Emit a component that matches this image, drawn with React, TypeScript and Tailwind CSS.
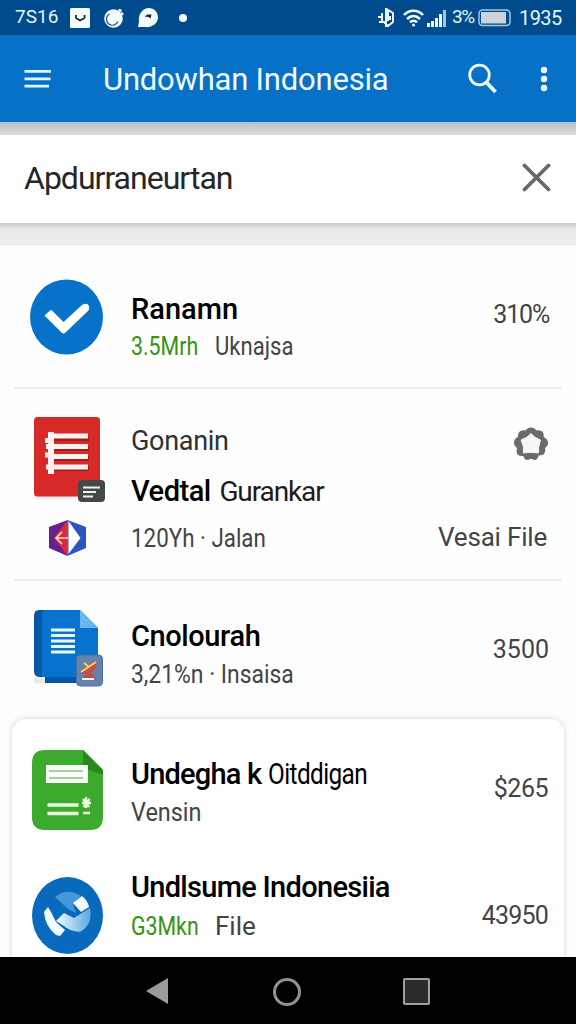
import type { ReactNode } from 'react';

function StatusBar() {
  return (
    <div className="flex h-[35px] items-center bg-[#004b8d] pl-[15px] pr-[15px] text-[19px] text-[#e4f5ff]">
      <span className="w-[55px]">7S16</span>
      <svg width="20" height="20" viewBox="0 0 20 20">
        <rect width="20" height="20" rx="1.5" fill="#f4fcff" />
        <path d="M6 7v3l4 2.500L14.500 10V7" fill="none" stroke="#17283c" strokeWidth="1.800" />
      </svg>
      <svg width="24" height="22" viewBox="0 0 24 22" className="ml-[13px]">
        <circle cx="10.5" cy="11.5" r="9.3" fill="#f4fcff" />
        <path d="M6.500 7a6 6 0 1 0 8.500 7.500" fill="none" stroke="#31506b" strokeWidth="1.2" />
        <path d="M15.500 3l3 1M20 6l-1.500 1.500" stroke="#f4fcff" strokeWidth="2.500" />
      </svg>
      <svg width="22" height="20" viewBox="0 0 22 20" className="ml-[10px]">
        <path d="M1 19L2 13C1 6 6 0 12 0c5 0 9 4 9 9 0 7-7 11-13 10z" fill="#f4fcff" />
        <path d="M7.500 8.500l3-2h4l-1 4-2-1.500z" fill="#152a3d" />
      </svg>
      <span className="ml-[20px] size-2 rounded-full bg-[#f4fcff]" />
      <svg width="18" height="20" viewBox="0 0 18 20" className="ml-auto" fill="none" stroke="#f4fcff" strokeWidth="1.9">
        <path d="M9 0v19M5 5v10M1 9h4M2 14h5l4 4 5-4V5l-5-3v11M13 8v4" />
      </svg>
      <svg width="21" height="18" viewBox="0 0 21 18" className="ml-[8px]" fill="none" stroke="#f4fcff" strokeWidth="2.6">
        <path d="M1 6C6 .3 15 .3 20 6M4 10c4-4 9-4 13 0M7 13.3c2-2 5-2 7 0" />
        <circle cx="10.5" cy="16" r="1.5" fill="#f4fcff" stroke="none" />
      </svg>
      <svg width="20" height="18" viewBox="0 0 20 18" className="ml-[3px]" fill="#f4fcff">
        <path d="M0 14h3v4H0zM4 12h3v6H4zM8 9h3v9H8zM12 5h3v13h-3z" />
        <path d="M16 1h3v17h-3z" fill="#a8c4dc" />
      </svg>
      <span className="ml-[5px] w-[26px] text-[19px] tracking-[-1.5px]">3%</span>
      <svg width="34" height="18" viewBox="0 0 34 18">
        <rect x="1" y="1" width="31" height="15.5" rx="3.5" fill="none" stroke="#a9c6d8" strokeWidth="1.5" />
        <rect x="3" y="3" width="25" height="11.5" fill="#ccd1dc" />
      </svg>
      <span className="ml-[7px] w-[42px] text-[20px] leading-[20px] tracking-[-0.6px]">1935</span>
    </div>
  );
}

function AppBar() {
  return (
    <header className="flex h-[87px] items-center bg-[#0770c7] pl-[24px] pr-[28px] text-[#f0fbff]">
      <svg width="28" height="20" viewBox="0 0 28 20" stroke="#dff8ff" strokeWidth="2.7">
        <path d="M.5 2.3h26.5M.5 9.8h26M.5 17.2h24.5" />
      </svg>
      <h1 className="ml-[51px] mt-[2px] whitespace-nowrap text-[31px] leading-[40px] tracking-[-0.2px]">
        Undowhan Indonesia
      </h1>
      <svg width="30" height="32" viewBox="0 0 30 32" className="ml-auto" fill="none" stroke="#f0fbff">
        <circle cx="11.5" cy="12" r="9.8" strokeWidth="2.8" />
        <path d="M18.5 19.5l9 9.5" strokeWidth="3.8" />
      </svg>
      <svg width="8" height="26" viewBox="0 0 8 26" className="ml-[42px]" fill="#f0fbff">
        <circle cx="4" cy="4" r="3.2" />
        <circle cx="4" cy="13" r="3.2" />
        <circle cx="4" cy="22" r="3.2" />
      </svg>
    </header>
  );
}

function CheckIcon() {
  return (
    <svg width="73" height="76" viewBox="0 0 73 76">
      <ellipse cx="36.5" cy="38" rx="36.5" ry="37.5" fill="#0672c9" />
      <path d="M14.500 36.500L20 31.500q1-1 2 0l11.500 11.500L52 26q5-3 7 1 1 3-1 5L35.500 53.500q-2 2-4 0z" fill="#fff" />
    </svg>
  );
}

function RedDocIcon() {
  return (
    <svg width="72" height="88" viewBox="0 0 72 88">
      <rect x="1" y="78" width="64" height="4" fill="#ededed" />
      <rect width="66" height="79.5" rx="3.5" fill="#d62a28" />
      <g stroke="#a91b1b" strokeWidth="5" transform="translate(1 2)">
        <path d="M18 19.5h36M18 29.5h36M18 39.5h36M18 49.5h36" />
      </g>
      <g stroke="#fff3f1" strokeWidth="5">
        <path d="M15 19h39M12 29.5h42M15 39.5h39M12 50h42" />
        <path d="M17 15v42" strokeWidth="6" />
        <path d="M11 23.5h8M11 38h8" />
      </g>
      <rect x="44" y="63" width="27" height="22" rx="4" fill="#444849" />
      <path d="M49 70.5h17M49 75h13M49 79.5h10" stroke="#edf1f1" strokeWidth="1.8" />
    </svg>
  );
}

function HexIcon() {
  return (
    <svg width="37" height="36" viewBox="0 0 37 36">
      <path d="M0 7L18.500 0v36L0 28z" fill="#66208f" />
      <path d="M18.500 0v36L5 18z" fill="#d82a3a" />
      <path d="M18.500 0L37 7v21L18.500 36z" fill="#2857c3" />
      <path d="M19.500 1l12 17-12 16z" fill="#fff" />
      <path d="M13 12l-6 6 6 6M7 18h12" fill="none" stroke="#ffd7cf" strokeWidth="1.7" />
    </svg>
  );
}

function BlueDocIcon() {
  return (
    <svg width="71" height="79" viewBox="0 0 71 79">
      <path d="M0 67.500h14v6H0z" fill="#e8e8e8" />
      <path d="M5 0h41v67H6q-6 0-6-6V6Q0 0 5 0z" fill="#0355a5" />
      <path d="M11 18h53v55H11z" fill="#0355a5" />
      <path d="M8 4q0-4 4-4h34l18 18v49H8z" fill="#0873cf" />
      <path d="M46 0l18 18H46z" fill="#65b8f2" />
      <path d="M17 20h24M17 25.500h24M17 31h24M17 36.500h24M17 42h24" stroke="#e9fbff" strokeWidth="3" />
      <rect x="42.500" y="45" width="26" height="31" rx="4" fill="#6382ac" stroke="#49709e" />
      <path d="M47 61l14-10 2 5-6 7 6 6H47l6-6-6 1z" fill="#c84c4d" />
      <path d="M47 62l15-10M50 53l5 4" stroke="#ffd33d" strokeWidth="2" />
      <path d="M48 69h12" stroke="#eef8ff" strokeWidth="2" />
    </svg>
  );
}

function GreenDocIcon() {
  return (
    <svg width="71" height="80" viewBox="0 0 71 80">
      <path d="M13 0h38l20 20v47q0 13-13 13H13Q0 80 0 67V13Q0 0 13 0z" fill="#3caa2c" />
      <path d="M51 0l20 20v5L51 18z" fill="#26891e" />
      <rect x="14" y="15" width="42" height="18" fill="#fafff5" />
      <path d="M17 21h34M17 28h34" stroke="#68905f" strokeWidth="1.200" />
      <path d="M15.500 55h31M15.500 63.500h31" stroke="#e8ffe0" strokeWidth="3.500" />
      <path d="M54 47v11M50 53h9M51 49l6 8M57.500 49l-6 8M51 63h7" stroke="#e8ffe0" strokeWidth="2.400" />
    </svg>
  );
}

function SwirlIcon() {
  return (
    <svg width="71" height="77" viewBox="0 0 71 77">
      <defs>
        <linearGradient id="swirl" x1="0" y1="0" x2="1" y2="0">
          <stop offset="0" stopColor="#f2fbff" />
          <stop offset="1" stopColor="#5ba8e4" />
        </linearGradient>
      </defs>
      <ellipse cx="35.500" cy="38.500" rx="35.500" ry="38.500" fill="#0869bd" />
      <path d="M23 20Q35 10 49 19L41 27 44 36 36 32z" fill="#4597db" />
      <path d="M24 44l8-8 10 5 16-10q3 17-10 24-11-1-16-6z" fill="url(#swirl)" />
      <path d="M16 30l-4 5q1 14 12 23l4 1 5-6-9-8-5-10z" fill="#f0fbff" />
      <path d="M41 26l9-7q6 5 7 11l-8 5z" fill="#f4fcff" />
    </svg>
  );
}

function GearIcon() {
  return (
    <svg width="36" height="36" viewBox="0 0 36 36">
      <path
        d="M18 2.500q3 0 5 3 4-1 6 1 1 2 .500 5 4 2 4.500 5t-3 5q1 4-1 6-2 1-5 1-1 4-3 4.500-2 0-4-1.500-2 1.500-4 1.500-2-.500-3-4-4 .500-6-1.500-1-2 0-6-3-2-3-5t4-5q-.500-3 1-5t6-1q2-3 5-3z"
        fill="#6a6b6c"
        stroke="#6a6b6c"
        strokeWidth="2"
        strokeLinejoin="round"
      />
      <path
        d="M18 7.500q3 4 9.500 6.500-2.500 6.500-2 13-7.500-1.500-15 0 1-6.500-2.500-13 7-2.500 10-6.500z"
        fill="#f5f6f6"
        stroke="#f5f6f6"
        strokeLinejoin="round"
      />
    </svg>
  );
}

function Title({ children, className = '' }: { children: ReactNode; className?: string }) {
  return (
    <p className={`whitespace-nowrap text-[29px] font-medium leading-[36px] text-black ${className}`}>{children}</p>
  );
}

function Meta({ children, className = '' }: { children: ReactNode; className?: string }) {
  return (
    <p className={`flex origin-left whitespace-nowrap text-[26px] leading-[38px] text-[#424446] ${className}`}>
      {children}
    </p>
  );
}

function Value({ children, className = '' }: { children: ReactNode; className?: string }) {
  return (
    <span className={`block whitespace-nowrap text-[25px] leading-[36px] text-[#424446] ${className}`}>{children}</span>
  );
}

export default function App() {
  return (
    <div className="flex h-[1024px] w-[576px] flex-col overflow-hidden bg-[#fefefe] font-['Roboto',sans-serif]">
      <StatusBar />
      <AppBar />
      <div className="h-[13px] shrink-0 border-t-2 border-[#a9c4dd] bg-linear-to-b from-[#c3c4c5] to-[#dcdcdc]" />

      <div className="flex h-[88px] shrink-0 items-center justify-between bg-white pl-[24px] pr-[25px]">
        <span className="mt-[-2px] text-[32px] leading-[40px] tracking-[-1px] text-[#252628]">Apdurraneurtan</span>
        <svg width="29" height="29" viewBox="0 0 29 29" stroke="#686868" strokeWidth="3.800" strokeLinecap="round" className="mt-[-3px]">
          <path d="M2.500 2.500l24 24M26.500 2.500l-24 24" />
        </svg>
      </div>
      <div className="h-[22px] shrink-0 border-b border-[#e6e6e6] bg-linear-to-b from-[#c9c9c9] via-[#ebebeb] via-35% to-[#eeeeee]" />

      <main className="flex min-h-0 flex-1 flex-col">
        <div className="mx-[14px] flex h-[144px] shrink-0 border-b-2 border-[#ebebeb] pl-[16px] pr-[13px]">
          <div className="w-[101px] pt-[34px]"><CheckIcon /></div>
          <div className="pt-[46px]">
            <Title>Ranamn</Title>
            <Meta>
              <span className="w-[84px] origin-left scale-x-[0.82] text-[#34930f]">3.5Mrh</span>
              <span className="origin-left scale-x-[0.85]">Uknajsa</span>
            </Meta>
          </div>
          <div className="ml-auto pt-[52px]"><Value className="tracking-[-1.2px]">310%</Value></div>
        </div>

        <div className="mx-[14px] flex h-[192px] shrink-0 border-b-2 border-[#ebebeb] pl-[20px] pr-[13px]">
          <div className="w-[97px] pt-[28px]">
            <RedDocIcon />
            <div className="ml-[15px] mt-[15px]"><HexIcon /></div>
          </div>
          <div className="pt-[34px]">
            <p className="text-[27px] leading-[36px] tracking-[-0.3px] text-[#2f3031]">Gonanin</p>
            <div className="mt-[14px]">
              <Title className="tracking-[-0.5px]">
                Vedtal{' '}
                <span className="ml-[2px] text-[28px] font-normal tracking-[-1.1px] text-[#1c1c1d]">Gurankar</span>
              </Title>
            </div>
            <div className="mt-[9px]"><Meta className="scale-x-[0.86]">120Yh · Jalan</Meta></div>
          </div>
          <div className="ml-auto flex flex-col items-end pt-[37px]">
            <GearIcon />
            <span className="mr-[2px] mt-[57px] whitespace-nowrap text-[26px] leading-[36px] tracking-[-0.2px] text-[#424446]">
              Vesai File
            </span>
          </div>
        </div>

        <div className="mx-[14px] flex h-[138px] shrink-0 pl-[20px] pr-[13px]">
          <div className="w-[97px] pt-[29px]"><BlueDocIcon /></div>
          <div className="pt-[37px]">
            <Title className="tracking-[-0.4px]">Cnolourah</Title>
            <Meta className="mt-px scale-x-[0.88]">3,21%n · Insaisa</Meta>
          </div>
          <div className="ml-auto pt-[51px]"><Value>3500</Value></div>
        </div>

        <section className="mx-[12px] min-h-0 flex-1 rounded-t-[14px] bg-white pl-[20px] pr-[16px] shadow-[0_0_6px_rgba(0,0,0,0.18)]">
          <div className="flex h-[124px]">
            <div className="w-[99px] pt-[31px]"><GreenDocIcon /></div>
            <div className="w-[300px] pt-[37px]">
              <Title className="tracking-[-0.8px]">
                Undegha k{' '}
                <span className="inline-block origin-left scale-x-[0.84] font-normal tracking-[-0.7px]">Oitddigan</span>
              </Title>
              <Meta className="mt-px scale-x-[0.9]">Vensin</Meta>
            </div>
            <div className="ml-auto pt-[52px]"><Value className="tracking-[-0.5px]">$265</Value></div>
          </div>
          <div className="flex">
            <div className="w-[99px] pt-[34px]"><SwirlIcon /></div>
            <div className="pt-[26px]">
              <Title className="tracking-[-0.7px]">Undlsume Indonesiia</Title>
              <Meta className="mt-[2px]">
                <span className="w-[84px] origin-left scale-x-[0.82] text-[#34930f]">G3Mkn</span>
                <span>File</span>
              </Meta>
            </div>
            <div className="ml-auto pt-[55px]"><Value className="tracking-[-0.8px]">43950</Value></div>
          </div>
        </section>
      </main>

      <nav className="flex h-[67px] shrink-0 items-center bg-black pl-[145px]">
        <svg width="24" height="28" viewBox="0 0 24 28">
          <path d="M1 14L23 1v26z" fill="#9b9b9b" />
        </svg>
        <span className="ml-[104px] mt-[2px] size-[28px] rounded-full border-[3px] border-[#929292]" />
        <span className="ml-[102px] mt-[2px] size-[27px] rounded-[2px] border-2 border-[#a0a0a0] bg-[#2a2c2d]" />
      </nav>
    </div>
  );
}
